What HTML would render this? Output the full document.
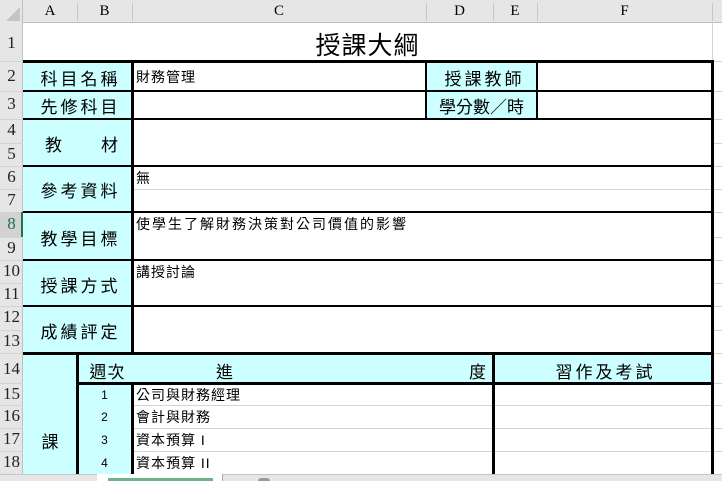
<!DOCTYPE html>
<html><head><meta charset="utf-8"><style>
*{margin:0;padding:0;box-sizing:border-box}
body{width:722px;height:481px;overflow:hidden;background:#fff;position:relative;font-family:"Liberation Serif","Noto Serif CJK SC","Noto Sans CJK TC",serif;}
div{position:absolute}
.h{background:#e6e6e6;color:#222;font-size:15px;text-align:center}
.g{background:#d4d4d4}
.b{background:#000}
.c{background:#ccffff}
.t{white-space:nowrap;color:#000;font-family:"Liberation Sans","Noto Sans CJK TC",sans-serif}
.L{font-size:17px;letter-spacing:3px}
.s{font-size:14px;letter-spacing:1px}
.r{left:0;width:23px;text-align:center;font-size:17px;font-family:'Liberation Serif',serif;color:#222}
</style></head><body>
<div class="h" style="left:0;top:0;width:722px;height:23px;border-bottom:1px solid #c0c0c0"></div>
<div class="h" style="left:0;top:0;width:23px;height:474px;border-right:1px solid #c0c0c0"></div>
<svg style="position:absolute;left:5px;top:6px" width="16" height="16"><polygon points="15,1 15,15 1,15" fill="#c4c4c4"/></svg>
<div class="t" style="left:23px;top:3px;width:54px;text-align:center;font-size:15px;font-family:'Liberation Serif',serif">A</div>
<div class="t" style="left:77px;top:3px;width:55px;text-align:center;font-size:15px;font-family:'Liberation Serif',serif">B</div>
<div class="t" style="left:132px;top:3px;width:294px;text-align:center;font-size:15px;font-family:'Liberation Serif',serif">C</div>
<div class="t" style="left:426px;top:3px;width:67px;text-align:center;font-size:15px;font-family:'Liberation Serif',serif">D</div>
<div class="t" style="left:493px;top:3px;width:44px;text-align:center;font-size:15px;font-family:'Liberation Serif',serif">E</div>
<div class="t" style="left:537px;top:3px;width:175px;text-align:center;font-size:15px;font-family:'Liberation Serif',serif">F</div>
<div style="left:77px;top:3px;width:1px;height:18px;background:#c8c8c8"></div>
<div style="left:132px;top:3px;width:1px;height:18px;background:#c8c8c8"></div>
<div style="left:426px;top:3px;width:1px;height:18px;background:#c8c8c8"></div>
<div style="left:493px;top:3px;width:1px;height:18px;background:#c8c8c8"></div>
<div style="left:537px;top:3px;width:1px;height:18px;background:#c8c8c8"></div>
<div style="left:712px;top:3px;width:1px;height:18px;background:#c8c8c8"></div>
<div class="t r" style="top:33px">1</div>
<div class="t r" style="top:66px">2</div>
<div class="t r" style="top:94px">3</div>
<div class="t r" style="top:120px">4</div>
<div class="t r" style="top:144px">5</div>
<div class="t r" style="top:167px">6</div>
<div class="t r" style="top:190px">7</div>
<div style="left:0;top:212px;width:23px;height:25px;background:#d2d2d2;border-right:2px solid #217346"></div>
<div class="t r" style="top:214px;color:#217346">8</div>
<div class="t r" style="top:238px">9</div>
<div class="t r" style="top:261px">10</div>
<div class="t r" style="top:284px">11</div>
<div class="t r" style="top:307px">12</div>
<div class="t r" style="top:331px">13</div>
<div class="t r" style="top:359px">14</div>
<div class="t r" style="top:384px">15</div>
<div class="t r" style="top:406px">16</div>
<div class="t r" style="top:429px">17</div>
<div class="t r" style="top:452px">18</div>
<div class="g" style="left:0;top:61px;width:23px;height:1px"></div>
<div class="g" style="left:0;top:91px;width:23px;height:1px"></div>
<div class="g" style="left:0;top:119px;width:23px;height:1px"></div>
<div class="g" style="left:0;top:143px;width:23px;height:1px"></div>
<div class="g" style="left:0;top:166px;width:23px;height:1px"></div>
<div class="g" style="left:0;top:189px;width:23px;height:1px"></div>
<div class="g" style="left:0;top:237px;width:23px;height:1px"></div>
<div class="g" style="left:0;top:260px;width:23px;height:1px"></div>
<div class="g" style="left:0;top:283px;width:23px;height:1px"></div>
<div class="g" style="left:0;top:306px;width:23px;height:1px"></div>
<div class="g" style="left:0;top:330px;width:23px;height:1px"></div>
<div class="g" style="left:0;top:353px;width:23px;height:1px"></div>
<div class="g" style="left:0;top:383px;width:23px;height:1px"></div>
<div class="g" style="left:0;top:405px;width:23px;height:1px"></div>
<div class="g" style="left:0;top:428px;width:23px;height:1px"></div>
<div class="g" style="left:0;top:451px;width:23px;height:1px"></div>
<div class="g" style="left:712px;top:23px;width:1px;height:40px"></div>
<div class="g" style="left:713px;top:61px;width:9px;height:1px"></div>
<div class="g" style="left:713px;top:91px;width:9px;height:1px"></div>
<div class="g" style="left:713px;top:119px;width:9px;height:1px"></div>
<div class="g" style="left:713px;top:143px;width:9px;height:1px"></div>
<div class="g" style="left:713px;top:166px;width:9px;height:1px"></div>
<div class="g" style="left:713px;top:189px;width:9px;height:1px"></div>
<div class="g" style="left:713px;top:212px;width:9px;height:1px"></div>
<div class="g" style="left:713px;top:237px;width:9px;height:1px"></div>
<div class="g" style="left:713px;top:260px;width:9px;height:1px"></div>
<div class="g" style="left:713px;top:283px;width:9px;height:1px"></div>
<div class="g" style="left:713px;top:306px;width:9px;height:1px"></div>
<div class="g" style="left:713px;top:330px;width:9px;height:1px"></div>
<div class="g" style="left:713px;top:353px;width:9px;height:1px"></div>
<div class="g" style="left:713px;top:383px;width:9px;height:1px"></div>
<div class="g" style="left:713px;top:405px;width:9px;height:1px"></div>
<div class="g" style="left:713px;top:428px;width:9px;height:1px"></div>
<div class="g" style="left:713px;top:451px;width:9px;height:1px"></div>
<div class="c" style="left:23px;top:61px;width:109px;height:292px"></div>
<div class="c" style="left:426px;top:61px;width:111px;height:58px"></div>
<div class="c" style="left:23px;top:353px;width:689px;height:30px"></div>
<div class="c" style="left:23px;top:383px;width:109px;height:91px"></div>
<div class="g" style="left:133px;top:189px;width:579px;height:1px"></div>
<div class="g" style="left:133px;top:405px;width:579px;height:1px"></div>
<div class="g" style="left:133px;top:428px;width:579px;height:1px"></div>
<div class="g" style="left:133px;top:451px;width:579px;height:1px"></div>
<div class="b" style="left:23px;top:60px;width:691px;height:3px"></div>
<div class="b" style="left:23px;top:90px;width:691px;height:2px"></div>
<div class="b" style="left:23px;top:118px;width:691px;height:2px"></div>
<div class="b" style="left:23px;top:165px;width:691px;height:2px"></div>
<div class="b" style="left:23px;top:211px;width:691px;height:2px"></div>
<div class="b" style="left:23px;top:259px;width:691px;height:2px"></div>
<div class="b" style="left:23px;top:305px;width:691px;height:2px"></div>
<div class="b" style="left:23px;top:352px;width:691px;height:3px"></div>
<div class="b" style="left:77px;top:382px;width:637px;height:3px"></div>
<div class="b" style="left:131px;top:61px;width:3px;height:292px"></div>
<div class="b" style="left:131px;top:383px;width:3px;height:91px"></div>
<div class="b" style="left:425px;top:61px;width:2px;height:58px"></div>
<div class="b" style="left:536px;top:61px;width:2px;height:58px"></div>
<div class="b" style="left:76px;top:353px;width:3px;height:121px"></div>
<div class="b" style="left:492px;top:353px;width:3px;height:121px"></div>
<div class="b" style="left:711px;top:61px;width:3px;height:413px"></div>
<div class="t" style="left:23px;top:26px;width:689px;text-align:center;font-size:25px;letter-spacing:1px">授課大綱</div>
<div class="t L" style="left:26px;top:65px;width:109px;text-align:center">科目名稱</div>
<div class="t L" style="left:26px;top:93px;width:109px;text-align:center">先修科目</div>
<div class="t L" style="left:45px;top:131px">教</div>
<div class="t L" style="left:101px;top:131px">材</div>
<div class="t L" style="left:26px;top:177px;width:109px;text-align:center">參考資料</div>
<div class="t L" style="left:26px;top:225px;width:109px;text-align:center">教學目標</div>
<div class="t L" style="left:26px;top:272px;width:109px;text-align:center">授課方式</div>
<div class="t L" style="left:26px;top:318px;width:109px;text-align:center">成績評定</div>
<div class="t L" style="left:429px;top:65px;width:111px;text-align:center">授課教師</div>
<div class="t L" style="left:426px;top:93px;width:111px;text-align:center;letter-spacing:0">學分數／時</div>
<div class="t s" style="left:136px;top:67px">財務管理</div>
<div class="t s" style="left:136px;top:168px">無</div>
<div class="t s" style="left:136px;top:214px;letter-spacing:2px">使學生了解財務決策對公司價值的影響</div>
<div class="t s" style="left:136px;top:262px">講授討論</div>
<div class="t L" style="left:80px;top:358px;width:55px;text-align:center;letter-spacing:1px">週次</div>
<div class="t L" style="left:216px;top:358px">進</div>
<div class="t L" style="left:469px;top:358px">度</div>
<div class="t L" style="left:496px;top:358px;width:219px;text-align:center">習作及考試</div>
<div class="t L" style="left:23px;top:428px;width:54px;text-align:center;letter-spacing:0">課</div>
<div class="t" style="left:77px;top:388px;width:55px;text-align:center;font-size:12px">1</div>
<div class="t" style="left:77px;top:410px;width:55px;text-align:center;font-size:12px">2</div>
<div class="t" style="left:77px;top:433px;width:55px;text-align:center;font-size:12px">3</div>
<div class="t" style="left:77px;top:456px;width:55px;text-align:center;font-size:12px">4</div>
<div class="t s" style="left:136px;top:385px">公司與財務經理</div>
<div class="t s" style="left:136px;top:407px">會計與財務</div>
<div class="t s" style="left:136px;top:430px">資本預算 I</div>
<div class="t s" style="left:136px;top:453px">資本預算 II</div>
<div style="left:0;top:474px;width:722px;height:7px;background:#e6e6e6;border-top:1px solid #c6c6c6"></div>
<div style="left:97px;top:474px;width:125px;height:7px;background:#fff"></div>
<div style="left:108px;top:478px;width:105px;height:3px;background:#6cb58c"></div>
<div style="left:222px;top:474px;width:1px;height:7px;background:#aaa"></div>
<div style="left:258px;top:478px;width:12px;height:3px;background:#999;border-radius:6px 6px 0 0"></div>
</body></html>
